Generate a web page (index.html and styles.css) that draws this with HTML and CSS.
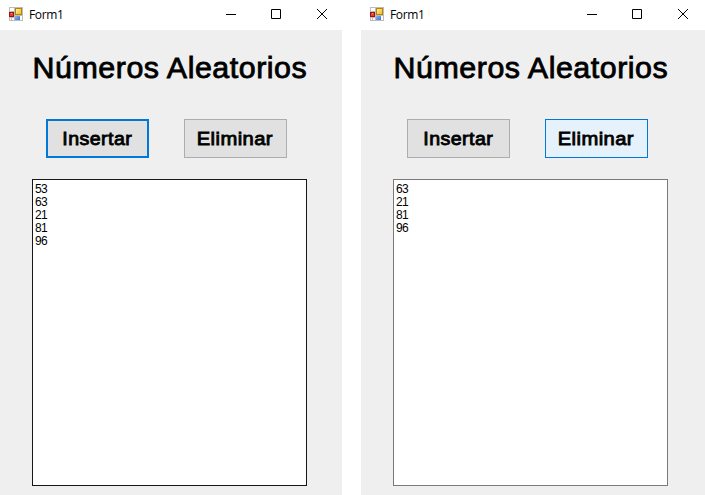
FILE: index.html
```html
<!DOCTYPE html>
<html lang="es">
<head>
<meta charset="utf-8">
<title>Form1</title>
<link rel="stylesheet" href="styles.css">
</head>
<body>
<svg width="0" height="0" class="defs">
  <defs>
    <linearGradient id="gold" x1="0" y1="0" x2="1" y2="1"><stop offset="0" stop-color="#fff0a0"/><stop offset="1" stop-color="#f3b91c"/></linearGradient>
    <linearGradient id="blue" x1="0" y1="0" x2="1" y2="1"><stop offset="0" stop-color="#8fb8f8"/><stop offset="1" stop-color="#3a70d8"/></linearGradient>
    <symbol id="app" viewBox="0 0 14 14">
      <path fill="#bcbcbc" d="M0 0h14v14H0z"/>
      <path fill="#fff" d="M1 1h4v3H1zM1 11h1v2H1zM3 11h2v2H3zM6 9h7v4H6z"/>
      <path fill="#a50f0f" d="M0 5h5v5H0z"/>
      <path fill="#d94a3c" d="M1 6h3v3H1z"/><path fill="#f0988c" d="M2 6h1v1H2z"/>
      <path fill="#b98500" d="M6 1h7v7H6z"/>
      <path fill="url(#gold)" d="M7 2h5v5H7z"/>
      <path fill="url(#blue)" d="M6 9h5v4H6z"/>
    </symbol>
    <symbol id="controls" viewBox="0 0 102 12">
      <path fill="#000" d="M0 5h10v1H0z"/>
      <path fill="none" stroke="#000" d="M45.500 .5h9v9h-9z"/>
      <path fill="none" stroke="#000" d="M91 0l10 10M101 0L91 10"/>
    </symbol>
  </defs>
</svg>
<main class="desktop">
  <section class="window">
    <header class="titlebar">
      <svg class="app-icon"><use href="#app"/></svg>
      <span class="caption">Form1</span>
      <svg class="controls"><use href="#controls"/></svg>
    </header>
    <div class="client">
      <h1>Números Aleatorios</h1>
      <div class="buttons">
        <button class="focused"><span class="insert">Insertar</span></button>
        <button><span class="delete">Eliminar</span></button>
      </div>
      <ul class="list active"><li>53</li><li>63</li><li>21</li><li>81</li><li>96</li></ul>
    </div>
  </section>
  <section class="window">
    <header class="titlebar">
      <svg class="app-icon"><use href="#app"/></svg>
      <span class="caption">Form1</span>
      <svg class="controls"><use href="#controls"/></svg>
    </header>
    <div class="client">
      <h1>Números Aleatorios</h1>
      <div class="buttons">
        <button><span class="insert">Insertar</span></button>
        <button class="hover"><span class="delete">Eliminar</span></button>
      </div>
      <ul class="list"><li>63</li><li>21</li><li>81</li><li>96</li></ul>
    </div>
  </section>
</main>
</body>
</html>
```
FILE: styles.css
```css
* { box-sizing: border-box; }
body { margin: 0; background: #fff; color: #000; overflow: hidden; font-family: "Liberation Sans", Arial, sans-serif; }
.defs { display: block; }
.desktop { display: grid; grid-template-columns: 342px 344px; column-gap: 19px; height: 495px; }
.window { display: flex; flex-direction: column; }
.titlebar { display: flex; height: 30px; padding-left: 9px; }
.app-icon { width: 14px; height: 14px; margin-top: 7px; }
.caption { width: 60px; margin-left: 6px; font: 12px/30px "Open Sans", "Noto Sans", sans-serif; letter-spacing: -0.350px; }
.controls { width: 102px; height: 12px; margin: 9px 0 0 137px; }
.client { flex: 1; background: #efefef; padding: 20px 0 0 32px; }
h1 { width: max-content; margin: 0; height: 36px; font-size: 29px; line-height: 36px; font-weight: 400; letter-spacing: 0.500px; white-space: nowrap; -webkit-text-stroke: 0.800px #000; transform: translateX(0.600px) scaleX(1.048); transform-origin: left; }
.buttons { display: flex; gap: 35px; margin: 33px 0 0 14px; }
button { width: 103px; height: 39px; padding: 0; border: 1px solid #adadad; background: #e1e1e1; color: #000; font: 18.700px/35px "Liberation Sans", Arial, sans-serif; -webkit-text-stroke: 0.850px #000; }
.insert, .delete { display: inline-block; letter-spacing: 0.400px; }
.insert { transform: scaleX(1.050); }
.delete { transform: translateX(-0.500px) scaleX(1.080); }
.focused { border: 2px solid #0078d7; }
.hover { border-color: #0078d7; background: #e5f1fb; }
.list { width: 275px; height: 307px; margin: 21px 0 0; padding: 3px 2px 2px; list-style: none; border: 1px solid #7a7a7a; background: #fff; font-size: 12px; line-height: 13px; letter-spacing: -0.600px; }
.active { border-color: #171717; }
```
